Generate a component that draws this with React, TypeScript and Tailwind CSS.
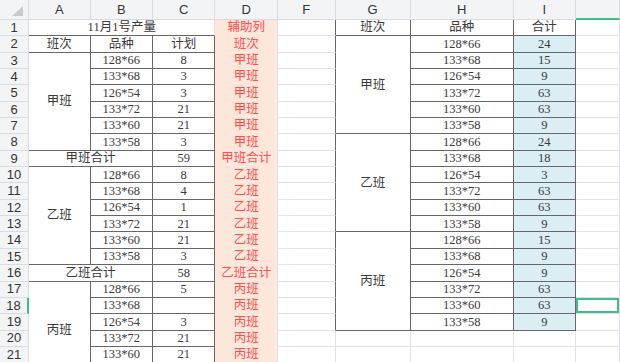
import React from 'react';
import clsx from 'clsx';

const varieties = ['128*66', '133*68', '126*54', '133*72', '133*60', '133*58'];
const leftPlan = {
  甲: ['8', '3', '3', '21', '21', '3'],
  乙: ['8', '4', '1', '21', '21', '3'],
  丙: ['5', '', '3', '21', '21', '3'],
};
const rightTotals = [
  '24', '15', '9', '63', '63', '9',
  '24', '18', '3', '63', '63', '9',
  '15', '9', '9', '63', '63', '9',
];
const helper: Record<number, string> = {
  1: '辅助列',
  2: '班次',
  9: '甲班合计',
  16: '乙班合计',
};

const base =
  'flex items-center justify-center overflow-hidden whitespace-nowrap leading-none border-r border-b';
const light = 'border-[#e1e3e8]';
const dark = 'border-[#676767]';

const Cell = ({ className, children }: { className?: string; children?: React.ReactNode }) => (
  <div className={clsx(base, className)}>{children}</div>
);

const Head = ({ children, className }: { children?: React.ReactNode; className?: string }) => (
  <div
    className={clsx(
      "flex items-center justify-center bg-[#f3f4f6] text-[13px] text-[#333] font-['Liberation_Sans',sans-serif] border-r border-b border-[#d9dbe0]",
      className,
    )}
  >
    {children}
  </div>
);

export default function App() {
  const cells: React.ReactNode[] = [];
  const push = (node: React.ReactElement) => cells.push(React.cloneElement(node, { key: cells.length }));

  // column headers
  push(
    <Head className="items-end justify-end pb-[3px] pr-[5px]">
      <svg width="11" height="10" viewBox="0 0 11 10">
        <polygon points="11,0 11,10 0,10" fill="#c9cbd0" />
      </svg>
    </Head>,
  );
  ['A', 'B', 'C', 'D', 'F', 'G', 'H', 'I'].forEach((l) => push(<Head>{l}</Head>));
  push(<Head className="bg-[#d3d6dc] border-b-2 border-b-[#3dbd88]" />);

  for (let r = 1; r <= 21; r++) {
    // row number
    push(
      r === 18 ? (
        <Head className="bg-[#d6d9de] text-[#23a46d] border-r-2 border-r-[#3dbd88]">{r}</Head>
      ) : (
        <Head>{r}</Head>
      ),
    );

    // left table A-C
    if (r === 1) {
      push(<Cell className="col-span-3 border-r-[#e1e3e8] border-b-[#676767]">11月1号产量</Cell>);
    } else if (r === 2) {
      push(<Cell className={dark}>班次</Cell>);
      push(<Cell className={dark}>品种</Cell>);
      push(<Cell className={dark}>计划</Cell>);
    } else if (r === 9 || r === 16) {
      push(<Cell className={clsx('col-span-2', dark)}>{r === 9 ? '甲班合计' : '乙班合计'}</Cell>);
      push(<Cell className={dark}>{r === 9 ? '59' : '58'}</Cell>);
    } else {
      const start = r < 9 ? 3 : r < 16 ? 10 : 17;
      const shift = r < 9 ? '甲' : r < 16 ? '乙' : '丙';
      const i = r - start;
      if (i === 0) push(<Cell className={clsx('row-span-6', dark)}>{shift}班</Cell>);
      push(<Cell className={dark}>{varieties[i]}</Cell>);
      push(<Cell className={dark}>{leftPlan[shift as keyof typeof leftPlan][i]}</Cell>);
    }

    // helper column D
    const d = helper[r] ?? (r < 9 ? '甲班' : r < 16 ? '乙班' : '丙班');
    push(
      <Cell className="bg-[#fde6da] text-[#ff4f4f] border-r-[#e1e3e8] border-b-[#fde6da]">{d}</Cell>,
    );

    // F
    push(<Cell className={r <= 19 ? 'border-r-[#676767] border-b-[#e1e3e8]' : light} />);

    // right table G-I
    if (r === 1) {
      push(<Cell className={dark}>班次</Cell>);
      push(<Cell className={dark}>品种</Cell>);
      push(<Cell className={dark}>合计</Cell>);
    } else if (r <= 19) {
      if (r === 2 || r === 8 || r === 14) {
        push(
          <Cell className={clsx('row-span-6', dark)}>
            {r === 2 ? '甲班' : r === 8 ? '乙班' : '丙班'}
          </Cell>,
        );
      }
      push(<Cell className={dark}>{varieties[(r - 2) % 6]}</Cell>);
      push(<Cell className={clsx('bg-[#daeef3]', dark)}>{rightTotals[r - 2]}</Cell>);
    } else {
      push(<Cell className={light} />);
      push(<Cell className={light} />);
      push(<Cell className={light} />);
    }

    // J
    push(
      <Cell
        className={clsx(light, r === 18 && 'shadow-[inset_0_0_0_2px_#3dbd88]')}
      />,
    );
  }

  return (
    <div className="h-[362px] w-[620px] overflow-hidden bg-white">
      <div className="grid grid-cols-[29px_61.7px_62.3px_62.5px_62.5px_57.7px_75px_103px_62.3px_1fr] grid-rows-[20px_repeat(22,16.35px)] text-[12.5px] text-[#3a3a3a] font-['Liberation_Serif','Noto_Sans_CJK_SC',serif]">
        {cells}
      </div>
    </div>
  );
}
